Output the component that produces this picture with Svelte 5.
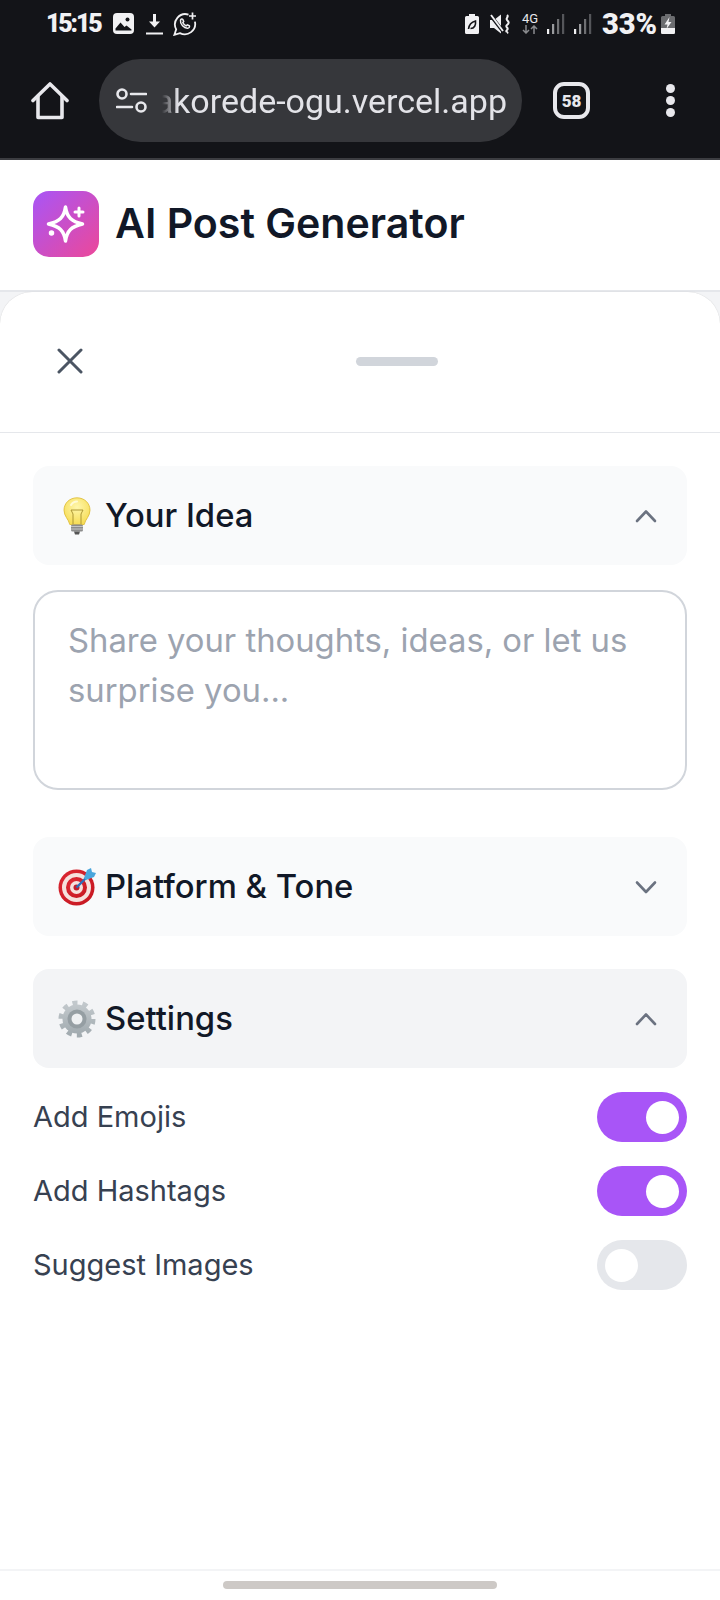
<script>
  let options = [
    { label: 'Add Emojis', on: true },
    { label: 'Add Hashtags', on: true },
    { label: 'Suggest Images', on: false }
  ];
</script>

<div class="phone">
  <div class="chrome">
    <div class="status">
      <div class="status-left">
        <span class="time">15:15</span>
        <svg class="ic-image" viewBox="0 0 21 21"><rect width="21" height="21" rx="4" fill="#f1f1f3"/><circle cx="14.500" cy="6.500" r="2" fill="#131418"/><path d="M2.500 15.500l5-6 4 4.500 2-1.500 5 4v1H2.500z" fill="#131418"/></svg>
        <svg class="ic-download" viewBox="0 0 17 22"><path d="M8.500 1v11" stroke="#f1f1f3" stroke-width="3" fill="none"/><path d="M3 8.500h11l-5.500 6z" fill="#f1f1f3"/><path d="M0 20.500h17" stroke="#f1f1f3" stroke-width="2"/></svg>
        <svg class="ic-whatsapp" viewBox="0 0 24 24" fill="none" stroke="#f1f1f3" stroke-width="1.800"><path d="M15.500 2.600A10.400 10.400 0 0 0 3.200 17.400L1.400 22.800l5.500-1.700A10.400 10.400 0 0 0 21.900 9.600"/><path d="M7.500 8.200c.5-1.600 1.900-1.300 2.300-.8l.9 2-.9 1.300c.7 1.300 1.800 2.400 3.300 3.200l1.300-1 2 1c.4.8-.2 2.200-1.800 2.300-3.400.2-7.800-3.900-7.100-8z" stroke-width="1.500"/><path d="M19.500 0.500v7M16 4h7" stroke-width="1.700"/></svg>
      </div>
      <div class="status-right">
        <svg class="ic-leaf" viewBox="0 0 14 20"><path d="M4 0h6v2h2.500A1.500 1.500 0 0 1 14 3.500V18.500A1.500 1.500 0 0 1 12.500 20H1.500A1.500 1.500 0 0 1 0 18.500V3.500A1.500 1.500 0 0 1 1.500 2H4z" fill="#f1f1f3"/><path d="M3.500 15c.5-4 3-7 7-8 .5 4-1 7.500-5 7.500" stroke="#131418" stroke-width="1.600" fill="none"/></svg>
        <svg class="ic-mute" viewBox="0 0 20 20"><path d="M0 6h4L11 .5v19L4 14H0z" fill="#f1f1f3"/><path d="M0 .5l13 17" stroke="#131418" stroke-width="3.500"/><path d="M1 1l12 16" stroke="#f1f1f3" stroke-width="1.800"/><path d="M17 1c2.500 2-2 3 0 5s2.500 3 0 5 2.500 3 0 5 2 2 0 3" stroke="#f1f1f3" stroke-width="2" fill="none"/></svg>
        <div class="net">
          <span>4G</span>
          <svg viewBox="0 0 16 9"><path d="M4 0v8M1 5l3 3 3-3" stroke="#8a8b8e" stroke-width="1.500" fill="none"/><path d="M12 9V1M9 4l3-3 3 3" stroke="#8a8b8e" stroke-width="1.500" fill="none"/></svg>
        </div>
        <svg class="ic-signal" viewBox="0 0 18 20"><rect x="0" y="15" width="2.200" height="5" fill="#f1f1f3"/><rect x="5" y="10" width="2.200" height="10" fill="#9a9b9e"/><rect x="10" y="5" width="2.200" height="15" fill="#6f7073"/><rect x="15" y="0" width="2.200" height="20" fill="#55565a"/></svg>
        <svg class="ic-signal" viewBox="0 0 18 20"><rect x="0" y="15" width="2.200" height="5" fill="#f1f1f3"/><rect x="5" y="10" width="2.200" height="10" fill="#9a9b9e"/><rect x="10" y="5" width="2.200" height="15" fill="#6f7073"/><rect x="15" y="0" width="2.200" height="20" fill="#55565a"/></svg>
        <span class="percent">33%</span>
        <svg class="ic-battery" viewBox="0 0 14 20"><path d="M4 0h6v2h2.500A1.500 1.500 0 0 1 14 3.500V18.500A1.500 1.500 0 0 1 12.500 20H1.500A1.500 1.500 0 0 1 0 18.500V3.500A1.500 1.500 0 0 1 1.500 2H4z" fill="#6b6c6f"/><path d="M0 14h14v4.500a1.500 1.500 0 0 1-1.500 1.500H1.500A1.500 1.500 0 0 1 0 18.500z" fill="#f1f1f3"/><path d="M8.500 3L3.500 10.500h3L5.500 15l5-7h-3z" fill="#f1f1f3"/></svg>
      </div>
    </div>
    <div class="toolbar">
      <svg class="ic-home" viewBox="0 0 38 38" fill="none" stroke="#e8e8ec" stroke-width="3.600" stroke-linejoin="round" stroke-linecap="round"><path d="M2 18.500L19 2l17 16.500"/><path d="M7 14.500V35.500H31V14.500"/></svg>
      <div class="url">
        <svg class="ic-tune" viewBox="0 0 31 25" fill="none" stroke="#e8e8ec" stroke-width="2.600" stroke-linecap="round"><circle cx="6" cy="6" r="4.500"/><path d="M15 6h15M1 19h15"/><circle cx="25" cy="19" r="4.500"/></svg>
        <div class="url-text"><span>akorede-ogu.vercel.app</span></div>
      </div>
      <div class="tabs">58</div>
      <div class="dots"><i></i><i></i><i></i></div>
    </div>
  </div>

  <header class="top">
    <div class="logo">
      <svg viewBox="0 0 66 66" fill="none" stroke="#fff" stroke-width="3.500" stroke-linejoin="round" stroke-linecap="round">
        <path d="M32.500 16C34 26.500 38.500 30.500 49.500 33 38.500 35.500 34 39.500 32.500 50 31 39.500 26.500 35.500 15.500 33 26.500 30.500 31 26.500 32.500 16Z"/>
        <path d="M46 17v8M42 21h8" stroke-width="3"/>
        <circle cx="18.500" cy="42" r="2" fill="#fff" stroke-width="1.500"/>
      </svg>
    </div>
    <h1>AI Post Generator</h1>
  </header>

  <div class="backdrop">
    <div class="sheet">
      <div class="sheet-head">
        <svg class="ic-close" viewBox="0 0 26 26" fill="none" stroke="#4b5563" stroke-width="3" stroke-linecap="round"><path d="M2 2l22 22M24 2L2 24"/></svg>
        <div class="handle"></div>
      </div>

      <div class="sheet-body">
        <section>
          <button class="acc">
            <span class="emoji">
              <svg class="bulb" viewBox="0 0 28 38">
                <defs>
                  <radialGradient id="bulbGlass" cx="0.5" cy="0.35" r="0.65"><stop offset="0" stop-color="#fff7ac"/><stop offset="1" stop-color="#f6dc55"/></radialGradient>
                </defs>
                <path d="M14 .8C6.500.8 1 6.300 1 13.200c0 6 4.500 8.700 5.800 14.300h14.400C22.500 21.900 27 19.200 27 13.200 27 6.300 21.500.8 14 .8z" fill="url(#bulbGlass)" stroke="#dcb92e" stroke-width=".8"/>
                <path d="M10 27V17l-2-4h12l-2 4v10" fill="none" stroke="#a58f2c" stroke-width=".9"/>
                <path d="M8 8c1.500-2.500 3.500-3.500 6-3.500" fill="none" stroke="#fffbd6" stroke-width="2" stroke-linecap="round"/>
                <rect x="8" y="27.500" width="12" height="7" rx="1.500" fill="#8c8c8c"/>
                <path d="M8 29.500h12M8 32h12" stroke="#c9c9c9" stroke-width=".9"/>
                <path d="M11 34.500h6l-1 3h-4z" fill="#555"/>
              </svg>
            </span>
            <span class="acc-title">Your Idea</span>
            <svg class="chev" viewBox="0 0 22 14" fill="none" stroke="#6b7280" stroke-width="2.600" stroke-linecap="round" stroke-linejoin="round"><path d="M2 12l9-9.500 9 9.500"/></svg>
          </button>
          <textarea placeholder="Share your thoughts, ideas, or let us surprise you..."></textarea>
        </section>

        <section class="platform">
          <button class="acc">
            <span class="emoji">
              <svg class="target" viewBox="0 0 38 38">
                <defs>
                  <radialGradient id="targetRed" cx="0.4" cy="0.4" r="0.7"><stop offset="0" stop-color="#e8303c"/><stop offset="1" stop-color="#c4161f"/></radialGradient>
                </defs>
                <circle cx="18.500" cy="19.500" r="18" fill="url(#targetRed)"/>
                <circle cx="18.500" cy="19.500" r="14.500" fill="#f6e1dd"/>
                <circle cx="18.500" cy="19.500" r="10.500" fill="url(#targetRed)"/>
                <circle cx="18.500" cy="19.500" r="6.500" fill="#f6e1dd"/>
                <circle cx="18.500" cy="19.500" r="3" fill="#c31d2b"/>
                <path d="M18.500 19.500L30 8" stroke="#2f6fb8" stroke-width="2.400"/>
                <path d="M26 10l3-8 4-2 1 4 4 1-2 4-8 3z" fill="#4aa6dc"/>
              </svg>
            </span>
            <span class="acc-title">Platform &amp; Tone</span>
            <svg class="chev" viewBox="0 0 22 14" fill="none" stroke="#6b7280" stroke-width="2.600" stroke-linecap="round" stroke-linejoin="round"><path d="M2 2.500l9 9.500 9-9.500"/></svg>
          </button>
        </section>

        <section class="settings">
          <button class="acc open">
            <span class="emoji">
              <svg class="gear" viewBox="0 0 38 38">
                <defs>
                  <linearGradient id="gearMetal" x1="0" y1="0" x2="0" y2="1"><stop offset="0" stop-color="#c2c8cc"/><stop offset="1" stop-color="#a2abb0"/></linearGradient>
                </defs>
                <circle cx="19" cy="19" r="15.500" fill="none" stroke="url(#gearMetal)" stroke-width="6" stroke-dasharray="4.870 4.870"/>
                <circle cx="19" cy="19" r="14.500" fill="url(#gearMetal)"/>
                <circle cx="19" cy="19" r="9.500" fill="#959ea3"/>
                <circle cx="19" cy="19" r="5.500" fill="#eef0f2"/>
              </svg>
            </span>
            <span class="acc-title">Settings</span>
            <svg class="chev" viewBox="0 0 22 14" fill="none" stroke="#6b7280" stroke-width="2.600" stroke-linecap="round" stroke-linejoin="round"><path d="M2 12l9-9.500 9 9.500"/></svg>
          </button>
          <div class="options">
            {#each options as opt}
              <div class="row">
                <span>{opt.label}</span>
                <div class="toggle" class:on={opt.on}><i></i></div>
              </div>
            {/each}
          </div>
        </section>
      </div>

      <div class="nav"><div class="pill"></div></div>
    </div>
  </div>
</div>

<style>
  :global(body) {
    margin: 0;
    background: #fff;
  }

  .phone {
    width: 720px;
    height: 1600px;
    display: flex;
    flex-direction: column;
    overflow: hidden;
    font-family: Inter, "Liberation Sans", sans-serif;
    color: #111827;
  }

  /* browser chrome */
  .chrome {
    height: 158px;
    background: #131418;
    border-bottom: 2px solid #3c3d41;
    flex: none;
  }

  .status {
    height: 59px;
    display: flex;
    justify-content: space-between;
    padding: 0 45px 0 46px;
    box-sizing: border-box;
    color: #f1f1f3;
  }

  .status-left, .status-right {
    display: flex;
    align-items: center;
    height: 47px;
  }

  .time, .percent {
    font-family: Roboto, sans-serif;
    font-weight: 900;
  }

  .time {
    font-size: 25px;
    letter-spacing: -2.200px;
    width: 55px;
    margin-right: 12px;
  }

  .ic-image { width: 21px; height: 21px; margin-right: 12px; }
  .ic-download { width: 17px; height: 22px; margin-right: 10px; }
  .ic-whatsapp { width: 24px; height: 24px; }
  .ic-leaf { width: 14px; height: 20px; margin-right: 11px; }
  .ic-mute { width: 20px; height: 20px; margin-right: 12px; }

  .net {
    width: 16px;
    margin-right: 9px;
    display: flex;
    flex-direction: column;
    align-items: center;
    font-family: Roboto, sans-serif;
    font-size: 13px;
    line-height: 11px;
    color: #e8e8ec;
  }

  .net svg { width: 16px; height: 9px; margin-top: 1px; }
  .ic-signal { width: 18px; height: 20px; margin-right: 9px; }

  .percent {
    font-size: 29px;
    width: 59px;
    white-space: nowrap;
    margin-left: 1px;
  }

  .ic-battery { width: 14px; height: 20px; }

  .toolbar {
    height: 83px;
    display: flex;
    align-items: center;
  }

  .ic-home {
    width: 38px;
    height: 38px;
    margin: 0 30px 0 31px;
    flex: none;
  }

  .url {
    width: 423px;
    height: 83px;
    background: #36373b;
    border-radius: 42px;
    display: flex;
    align-items: center;
    box-sizing: border-box;
    padding: 0 15px 0 17px;
    flex: none;
  }

  .ic-tune { width: 31px; height: 25px; flex: none; }

  .url-text {
    flex: 1;
    margin-left: 15px;
    overflow: hidden;
    white-space: nowrap;
    text-align: right;
    direction: rtl;
    font-family: Roboto, sans-serif;
    font-size: 34px;
    color: #e3e3e8;
    mask-image: linear-gradient(to right, transparent 0, #000 16px);
    -webkit-mask-image: linear-gradient(to right, transparent 0, #000 16px);
  }

  .url-text span { direction: ltr; unicode-bidi: embed; }

  .tabs {
    width: 37px;
    height: 37px;
    margin-left: 31px;
    border: 4px solid #e8e8ec;
    border-radius: 11px;
    box-sizing: border-box;
    display: flex;
    align-items: center;
    justify-content: center;
    font-family: Roboto, sans-serif;
    font-weight: 900;
    font-size: 17px;
    color: #e8e8ec;
    flex: none;
  }

  .dots {
    display: flex;
    flex-direction: column;
    gap: 3px;
    margin-left: 76px;
  }

  .dots i {
    width: 9px;
    height: 9px;
    border-radius: 50%;
    background: #e8e8ec;
  }

  /* app header */
  .top {
    height: 128px;
    padding: 0 33px 2px;
    display: flex;
    align-items: center;
    gap: 16px;
    border-bottom: 2px solid #e5e7eb;
    flex: none;
  }

  .logo {
    width: 66px;
    height: 66px;
    border-radius: 16px;
    background: linear-gradient(135deg, #a855f7, #ec4899);
  }

  .logo svg { display: block; width: 66px; height: 66px; }

  h1 {
    margin: 0 0 2px;
    font-size: 41.100px;
    font-weight: 600;
    color: #111827;
  }

  /* bottom sheet */
  .backdrop {
    flex: 1;
    background: #f3f4f6;
    display: flex;
  }

  .sheet {
    flex: 1;
    background: #fff;
    border-radius: 32px 32px 0 0;
    box-shadow: 0 0 1px rgba(0, 0, 0, 0.2);
    display: flex;
    flex-direction: column;
  }

  .sheet-head {
    height: 138px;
    padding: 0 0 2px 57px;
    border-bottom: 1px solid #e5e7eb;
    display: flex;
    align-items: center;
    flex: none;
  }

  .ic-close { width: 26px; height: 26px; flex: none; }

  .handle {
    width: 82px;
    height: 9px;
    border-radius: 5px;
    background: #d1d5db;
    margin-left: 273px;
  }

  .sheet-body {
    flex: 1;
    padding: 33px 33px 0;
  }

  section { display: block; }
  .platform { margin-top: 47px; }
  .settings { margin-top: 33px; }

  .acc {
    width: 100%;
    height: 99px;
    border: 0;
    border-radius: 16px;
    background: #f9fafb;
    display: flex;
    align-items: center;
    padding: 0 30px 0 25px;
    font-family: inherit;
    color: #111827;
  }

  .acc.open { background: #f3f4f6; }

  .emoji {
    width: 38px;
    height: 38px;
    margin-right: 9px;
    display: flex;
    align-items: center;
    justify-content: center;
    flex: none;
  }

  .bulb { width: 28px; height: 38px; }
  .target, .gear { width: 38px; height: 38px; }

  .acc-title {
    flex: 1;
    text-align: left;
    font-size: 32.800px;
    font-weight: 500;
    margin-bottom: 2px;
  }

  .chev { width: 22px; height: 14px; flex: none; }

  textarea {
    display: block;
    width: 100%;
    height: 200px;
    margin-top: 25px;
    box-sizing: border-box;
    border: 2px solid #d1d5db;
    border-radius: 25px;
    padding: 23px 33px;
    resize: none;
    outline: none;
    font-family: inherit;
    font-size: 32.800px;
    line-height: 50px;
    color: #111827;
  }

  textarea::placeholder { color: #9ca3af; }

  .options {
    margin-top: 24px;
    display: flex;
    flex-direction: column;
    gap: 24px;
  }

  .row {
    height: 50px;
    display: flex;
    align-items: center;
    justify-content: space-between;
    font-size: 29px;
    font-weight: 400;
    color: #374151;
  }

  .row span { margin-bottom: 1px; }

  .toggle {
    width: 90px;
    height: 50px;
    border-radius: 25px;
    background: #e5e7eb;
    display: flex;
    align-items: center;
    padding: 0 8px;
    box-sizing: border-box;
  }

  .toggle.on {
    background: #a855f7;
    justify-content: flex-end;
  }

  .toggle i {
    width: 33px;
    height: 33px;
    border-radius: 50%;
    background: #fff;
  }

  .nav {
    height: 19px;
    border-top: 2px solid #f3f4f6;
    flex: none;
    display: flex;
    justify-content: center;
    padding-top: 10px;
  }

  .pill {
    width: 274px;
    height: 8px;
    border-radius: 4px;
    background: #cdc9c6;
  }
</style>
